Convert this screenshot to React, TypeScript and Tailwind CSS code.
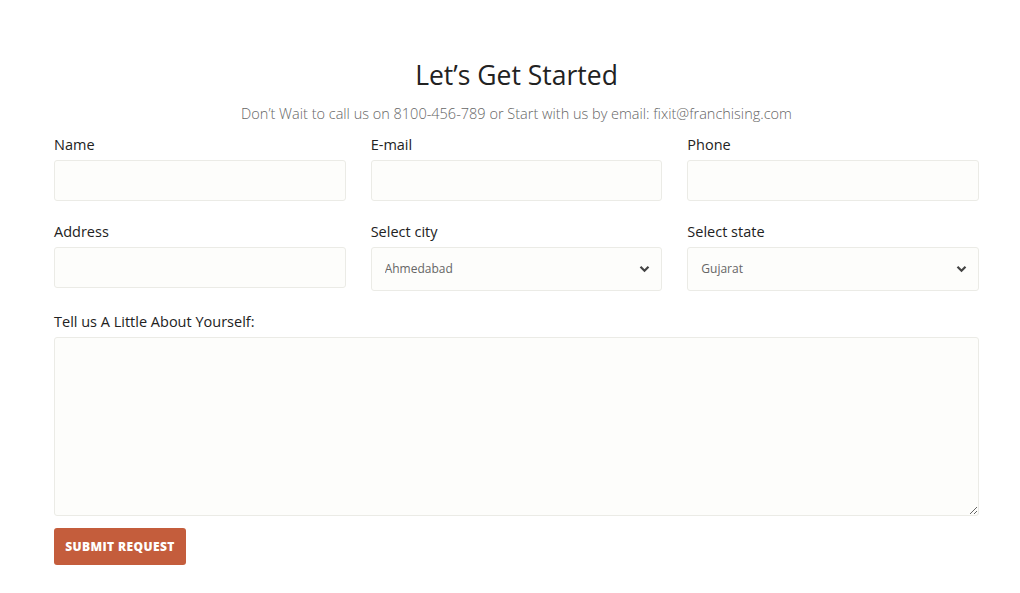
import { useState } from "react"

const Chevron = () => (
    <svg className="pointer-events-none absolute right-[12px] top-1/2 -translate-y-1/2" width="11" height="8" viewBox="0 0 11 8" fill="none">
        <path d="M1.5 1.8 5.5 5.8 9.5 1.8" stroke="#444" strokeWidth="2.2" />
    </svg>
)

const Campo = ({ label, children }: { label: string, children: React.ReactNode }) => (
    <div className="flex flex-col">
        <label className="text-[14.5px] leading-[21px] text-[#222] mb-[5px]">{label}</label>
        {children}
    </div>
)

const inputClase = "h-[41px] w-full rounded-[3px] border border-[#ebebe6] bg-[#fdfdfb] px-[14px] text-[12px] outline-none"

const App = () => {
    const [ciudad, setCiudad] = useState('Ahmedabad')
    const [estado, setEstado] = useState('Gujarat')

    return <div className="min-h-[593px] bg-white font-['Open_Sans',sans-serif]">
        <form className="ml-[54px] w-[925px] pt-[58px]" onSubmit={e => e.preventDefault()}>
            <h1 className="text-center text-[26.5px] leading-[34px] text-[#222]">Let’s Get Started</h1>
            <p className="mt-[12px] text-center text-[14.5px] leading-[20px] font-light text-[#666]">
                Don’t Wait to call us on 8100-456-789 or Start with us by email: fixit@franchising.com
            </p>
            <div className="mt-[10px] grid grid-cols-3 gap-x-[25px] gap-y-[20px]">
                <Campo label="Name"><input className={inputClase} /></Campo>
                <Campo label="E-mail"><input className={inputClase} /></Campo>
                <Campo label="Phone"><input className={inputClase} /></Campo>
                <Campo label="Address"><input className={inputClase} /></Campo>
                <Campo label="Select city">
                    <div className="relative">
                        <select value={ciudad} onChange={e => setCiudad(e.target.value)}
                            className="h-[44px] w-full appearance-none rounded-[3px] border border-[#ebebe6] bg-[#fdfdfb] px-[13px] text-[12px] text-[#666] outline-none">
                            <option>Ahmedabad</option>
                            <option>Surat</option>
                            <option>Vadodara</option>
                        </select>
                        <Chevron />
                    </div>
                </Campo>
                <Campo label="Select state">
                    <div className="relative">
                        <select value={estado} onChange={e => setEstado(e.target.value)}
                            className="h-[44px] w-full appearance-none rounded-[3px] border border-[#ebebe6] bg-[#fdfdfb] px-[13px] text-[12px] text-[#666] outline-none">
                            <option>Gujarat</option>
                            <option>Maharashtra</option>
                            <option>Rajasthan</option>
                        </select>
                        <Chevron />
                    </div>
                </Campo>
            </div>
            <div className="mt-[20px]">
                <Campo label="Tell us A Little About Yourself:">
                    <textarea className="h-[179px] w-full rounded-[3px] border border-[#ebebe6] bg-[#fdfdfb] p-[14px] text-[12px] outline-none" />
                </Campo>
            </div>
            <button type="submit" className="mt-[12px] h-[37px] w-[132px] rounded-[3px] bg-[#c45d3c] text-[12px] font-extrabold tracking-[0.4px] text-white">
                SUBMIT REQUEST
            </button>
        </form>
    </div>
}
export default App
